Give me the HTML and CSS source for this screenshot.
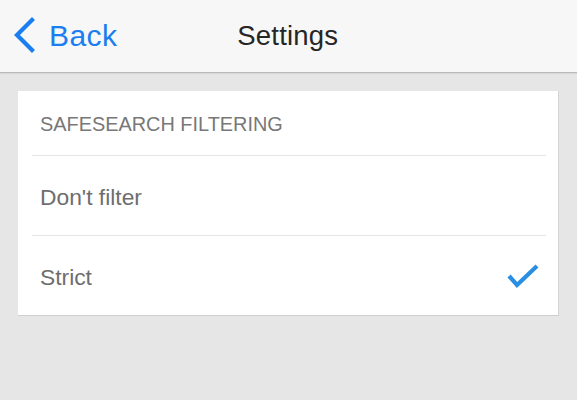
FILE: index.html
```html
<!DOCTYPE html>
<html>
<head>
<meta charset="utf-8">
<link rel="stylesheet" href="styles.css">
</head>
<body>
<header class="navbar">
  <a class="back">
    <svg class="chevron" width="24" height="38" viewBox="0 0 24 38"><polyline points="19,3 4,18 19,33" fill="none" stroke="#1a7ef0" stroke-width="4.2" stroke-linecap="square" stroke-linejoin="miter"/></svg>
    <span class="back-label">Back</span>
  </a>
  <h1 class="title">Settings</h1>
</header>
<main class="content">
  <section class="card">
    <div class="section-head">SAFESEARCH FILTERING</div>
    <div class="option"><span>Don't filter</span></div>
    <div class="option"><span>Strict</span>
      <svg class="check" width="36" height="28" viewBox="0 0 36 28"><polyline points="3,13 11,22 31,3" fill="none" stroke="#2a8ee2" stroke-width="4.2"/></svg>
    </div>
  </section>
</main>
</body>
</html>
```
FILE: styles.css
```css
html, body {
  margin: 0;
  padding: 0;
  background: #e6e6e6;
  font-family: "Liberation Sans", Arial, sans-serif;
  width: 577px;
  height: 400px;
  overflow: hidden;
}
.navbar {
  height: 72px;
  background: #f7f7f7;
  border-bottom: 1px solid #b9b9b9;
  box-shadow: 0 1px 1px rgba(0,0,0,0.06);
  display: flex;
  align-items: center;
  position: relative;
}
.back {
  display: flex;
  align-items: center;
  padding-left: 13px;
  color: #1a7ef0;
}
.chevron {
  display: block;
}
.back-label {
  font-size: 30px;
  margin-left: 12px;
  letter-spacing: 0.4px;
}
.title {
  margin: 0 0 0 120px;
  font-size: 27.5px;
  font-weight: normal;
  color: #262626;
  letter-spacing: 0.2px;
}
.content {
  padding: 18px 18px 0 18px;
}
.card {
  background: #fff;
  border-right: 1px solid #d4d4d4;
  border-bottom: 1px solid #cfcfcf;
  padding: 0 12px 0 14px;
}
.section-head {
  height: 62px;
  padding-top: 2px;
  display: flex;
  align-items: center;
  padding-left: 8px;
  font-size: 19.9px;
  color: #787878;
  border-bottom: 1px solid #e6e6e6;
}
.option {
  height: 76px;
  padding-top: 3px;
  display: flex;
  align-items: center;
  justify-content: space-between;
  padding-left: 8px;
  font-size: 22.8px;
  color: #6e6e6e;
  border-bottom: 1px solid #e6e6e6;
}
.option:last-child {
  border-bottom: none;
}
.check {
  display: block;
  margin-right: 4px;
  margin-top: 0;
}
```
